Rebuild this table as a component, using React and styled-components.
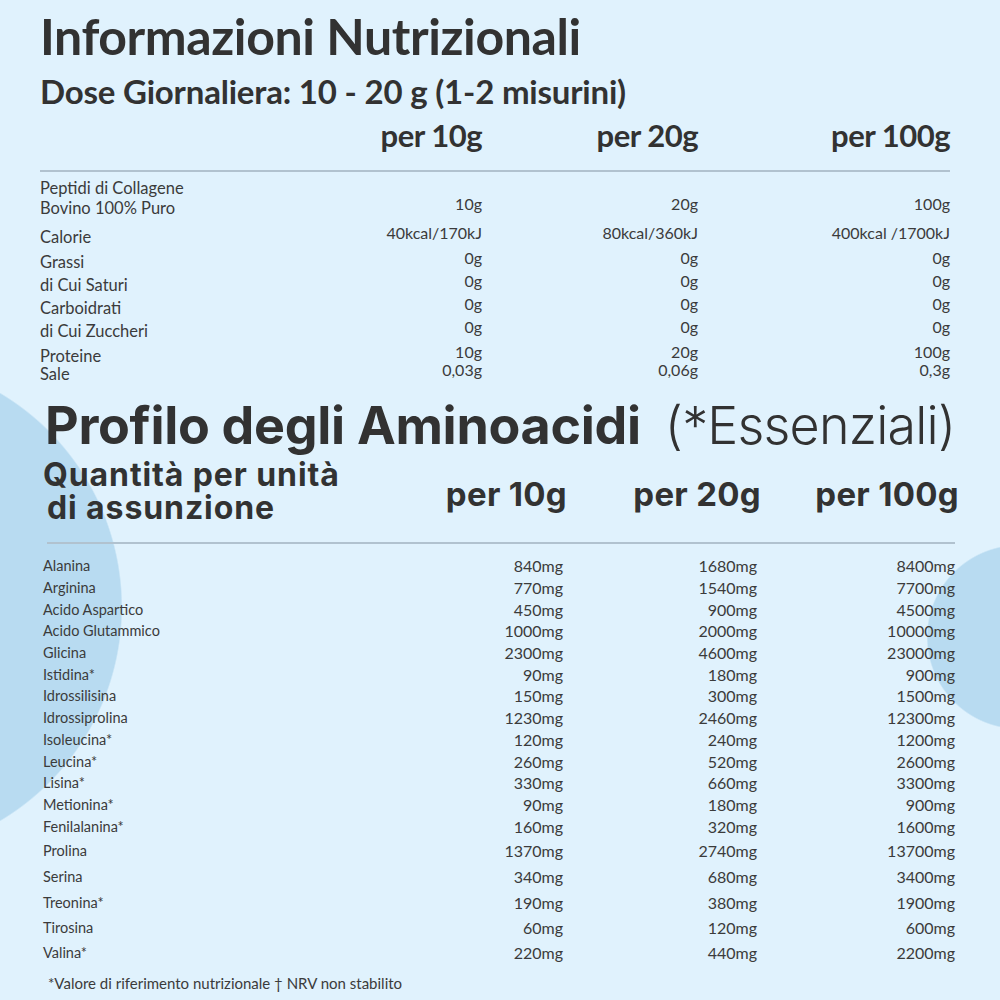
import React from 'react'
import styled, { createGlobalStyle } from 'styled-components'

const GlobalStyle = createGlobalStyle`
  html, body {
    margin: 0;
    padding: 0;
    background: #e0f2fd;
  }
  * { box-sizing: border-box; }
`

const nutrition = [
  { label: ['Peptidi di Collagene', 'Bovino 100% Puro'], vals: ['10g', '20g', '100g'], h: 40 },
  { label: ['Calorie'], vals: ['40kcal/170kJ', '80kcal/360kJ', '400kcal /1700kJ'], h: 29 },
  { label: ['Grassi'], vals: ['0g', '0g', '0g'], h: 25 },
  { label: ['di Cui Saturi'], vals: ['0g', '0g', '0g'], h: 23 },
  { label: ['Carboidrati'], vals: ['0g', '0g', '0g'], h: 23 },
  { label: ['di Cui Zuccheri'], vals: ['0g', '0g', '0g'], h: 23 },
  { label: ['Proteine'], vals: ['10g', '20g', '100g'], h: 25 },
  { label: ['Sale'], vals: ['0,03g', '0,06g', '0,3g'], h: 18 },
]

const amino = [
  ['Alanina', '840mg', '1680mg', '8400mg', 21.7],
  ['Arginina', '770mg', '1540mg', '7700mg', 21.7],
  ['Acido Aspartico', '450mg', '900mg', '4500mg', 21.7],
  ['Acido Glutammico', '1000mg', '2000mg', '10000mg', 21.7],
  ['Glicina', '2300mg', '4600mg', '23000mg', 21.7],
  ['Istidina*', '90mg', '180mg', '900mg', 21.7],
  ['Idrossilisina', '150mg', '300mg', '1500mg', 21.7],
  ['Idrossiprolina', '1230mg', '2460mg', '12300mg', 21.7],
  ['Isoleucina*', '120mg', '240mg', '1200mg', 21.7],
  ['Leucina*', '260mg', '520mg', '2600mg', 21.7],
  ['Lisina*', '330mg', '660mg', '3300mg', 21.7],
  ['Metionina*', '90mg', '180mg', '900mg', 21.7],
  ['Fenilalanina*', '160mg', '320mg', '1600mg', 22],
  ['Prolina', '1370mg', '2740mg', '13700mg', 27],
  ['Serina', '340mg', '680mg', '3400mg', 25.3],
  ['Treonina*', '190mg', '380mg', '1900mg', 25.3],
  ['Tirosina', '60mg', '120mg', '600mg', 25.3],
  ['Valina*', '220mg', '440mg', '2200mg', 25.3],
]

function App() {
  return (
    <>
      <GlobalStyle />
      <Page>
        <Section>
          <Title>Informazioni Nutrizionali</Title>
          <Subtitle>Dose Giornaliera: 10 - 20 g (1-2 misurini)</Subtitle>
          <NutriHead>
            <span />
            <ColHead>per 10g</ColHead>
            <ColHead>per 20g</ColHead>
            <ColHead>per 100g</ColHead>
          </NutriHead>
          <Divider />
          <NutriBody>
            {nutrition.map((row, i) => (
              <NutriRow key={i} h={row.h}>
                <NutriLabel>
                  {row.label.map((l, j) => (
                    <div key={j}>{l}</div>
                  ))}
                </NutriLabel>
                {row.vals.map((v, j) => (
                  <NutriValue key={j}>{v}</NutriValue>
                ))}
              </NutriRow>
            ))}
          </NutriBody>
        </Section>

        <AminoSection>
          <BigTitle>
            Profilo degli Aminoacidi <Light>(*Essenziali)</Light>
          </BigTitle>
          <AminoHead>
            <Qty>
              Quantità per unità
              <br />
              <span>di assunzione</span>
            </Qty>
            <AminoColHead>per 10g</AminoColHead>
            <AminoColHead>per 20g</AminoColHead>
            <AminoColHead>per 100g</AminoColHead>
          </AminoHead>
          <AminoDivider />
          <AminoBody>
            {amino.map(([name, a, b, c, h]) => (
              <AminoRow key={name} h={h}>
                <AminoLabel>{name}</AminoLabel>
                <AminoValue>{a}</AminoValue>
                <AminoValue>{b}</AminoValue>
                <AminoValue>{c}</AminoValue>
              </AminoRow>
            ))}
          </AminoBody>
          <Footnote>*Valore di riferimento nutrizionale † NRV non stabilito</Footnote>
        </AminoSection>
      </Page>
    </>
  )
}

const Page = styled.div`
  width: 1000px;
  height: 1000px;
  overflow: hidden;
  color: #323232;
  font-family: 'Lato', 'Noto Sans', sans-serif;
  background:
    radial-gradient(circle at -127px 607px, #b8dbf1 248px, rgba(184, 219, 241, 0) 249.5px),
    radial-gradient(circle at 1019px 637px, #b8dbf1 91px, rgba(184, 219, 241, 0) 92.5px),
    #e0f2fd;
  display: flex;
  flex-direction: column;
`

const Section = styled.section`
  padding: 8px 50px 0 40px;
`

const Title = styled.h1`
  margin: 0;
  font-size: 50px;
  line-height: 56px;
  font-weight: 700;
  letter-spacing: -0.4px;
`

const Subtitle = styled.h2`
  margin: 9px 0 0;
  font-size: 33px;
  line-height: 36px;
  font-weight: 700;
  letter-spacing: -0.2px;
`

const nutriCols = '240px 202px 216px 252px'

const NutriHead = styled.div`
  display: grid;
  grid-template-columns: ${nutriCols};
  margin-top: 6px;
`

const ColHead = styled.div`
  text-align: right;
  font-size: 31px;
  line-height: 40px;
  font-weight: 700;
  letter-spacing: -0.5px;
`

const Divider = styled.div`
  height: 2px;
  background: #b1c2cf;
  margin-top: 15px;
`

const NutriBody = styled.div`
  display: flex;
  flex-direction: column;
  margin-top: 6px;
`

const NutriRow = styled.div`
  display: grid;
  grid-template-columns: ${nutriCols};
  grid-template-rows: ${(p) => p.h}px;
  align-items: end;
  height: ${(p) => p.h}px;
`

const NutriLabel = styled.div`
  font-size: 16.5px;
  line-height: 20px;
  color: #3b3b3b;
`

const NutriValue = styled.div`
  text-align: right;
  font-size: 16px;
  line-height: 20px;
  color: #3b3b3b;
  margin-bottom: 4px;
`

const AminoSection = styled.section`
  padding: 13px 45px 0 43px;
  display: flex;
  flex-direction: column;
`

const BigTitle = styled.h1`
  margin: 0;
  padding-left: 2px;
  font-family: 'Inter', 'Lato', sans-serif;
  font-size: 52px;
  line-height: 58px;
  font-weight: 700;
  letter-spacing: -0.3px;
  white-space: nowrap;
`

const Light = styled.span`
  font-weight: 300;
  margin-left: 12px;
  letter-spacing: -0.8px;
`

const aminoCols = '400px 120px 194px 198px'

const AminoHead = styled.div`
  display: grid;
  grid-template-columns: ${aminoCols};
  align-items: end;
  margin-top: 3px;
`

const Qty = styled.div`
  font-family: 'Inter', 'Lato', sans-serif;
  font-size: 32px;
  line-height: 33px;
  font-weight: 700;
  letter-spacing: 0.9px;
  white-space: nowrap;
  span {
    padding-left: 4px;
  }
`

const AminoColHead = styled.div`
  text-align: right;
  font-family: 'Inter', 'Lato', sans-serif;
  font-size: 33px;
  line-height: 40px;
  font-weight: 700;
  letter-spacing: 0.3px;
  margin-right: -4px;
  margin-bottom: 10px;
`

const AminoDivider = styled.div`
  height: 2px;
  background: #b1c2cf;
  margin: 18px 0 0 4px;
`

const AminoBody = styled.div`
  display: flex;
  flex-direction: column;
  margin-top: 11px;
`

const AminoRow = styled.div`
  display: grid;
  grid-template-columns: ${aminoCols};
  align-items: center;
  height: ${(p) => p.h}px;
`

const AminoLabel = styled.div`
  font-size: 14.5px;
  line-height: 19px;
  color: #3b3b3b;
`

const AminoValue = styled.div`
  text-align: right;
  font-size: 16px;
  line-height: 19px;
  color: #3b3b3b;
`

const Footnote = styled.div`
  margin-top: 9px;
  padding-left: 5px;
  font-size: 15px;
  line-height: 19px;
  color: #3b3b3b;
`

export default App
